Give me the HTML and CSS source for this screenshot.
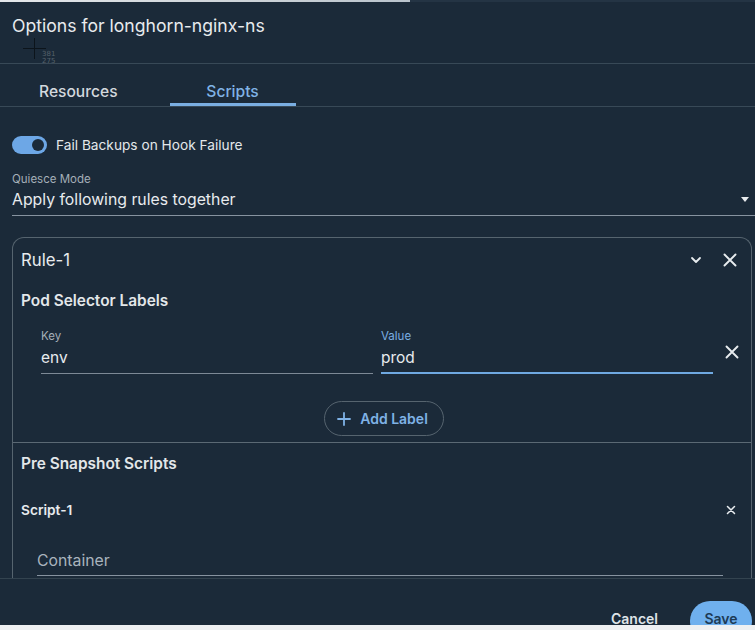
FILE: index.html
```html
<!DOCTYPE html>
<html>
<head>
<meta charset="utf-8">
<link rel="stylesheet" href="styles.css">
</head>
<body>
<div class="topstrip"><div class="topstrip-light"></div></div>
<div class="app">
  <header class="header">
    <h1 class="title">Options for longhorn-nginx-ns</h1>
    <div class="cursor">
      <span class="cursor-v"></span><span class="cursor-h"></span>
      <span class="cursor-txt">381<br>275</span>
    </div>
  </header>
  <nav class="tabs">
    <div class="tab">Resources</div>
    <div class="tab active">Scripts</div>
  </nav>
  <main class="content">
    <div class="toggle-row">
      <span class="toggle"><span class="knob"></span></span>
      <span class="toggle-label">Fail Backups on Hook Failure</span>
    </div>
    <div class="select">
      <div class="field-label">Quiesce Mode</div>
      <div class="select-value">
        <span>Apply following rules together</span>
        <span class="caret"></span>
      </div>
    </div>
    <section class="card">
      <div class="card-head">
        <span class="rule-title">Rule-1</span>
        <div class="head-icons">
          <svg width="14" height="14" viewBox="0 0 14 14"><path d="M3 5 L7 9 L11 5" fill="none" stroke="#e8ecef" stroke-width="1.8" stroke-linecap="round" stroke-linejoin="round"/></svg>
          <svg width="16" height="16" viewBox="0 0 16 16"><path d="M2.5 2.5 L13.5 13.5 M13.5 2.5 L2.5 13.5" fill="none" stroke="#e8ecef" stroke-width="1.9" stroke-linecap="round"/></svg>
        </div>
      </div>
      <div class="section-title">Pod Selector Labels</div>
      <div class="label-row">
        <div class="field key">
          <div class="field-label">Key</div>
          <div class="field-value">env</div>
        </div>
        <div class="field value focused">
          <div class="field-label">Value</div>
          <div class="field-value">prod</div>
        </div>
        <svg class="row-x" width="16" height="16" viewBox="0 0 16 16"><path d="M2.5 2.5 L13.5 13.5 M13.5 2.5 L2.5 13.5" fill="none" stroke="#e8ecef" stroke-width="1.9" stroke-linecap="round"/></svg>
      </div>
      <div class="add-wrap">
        <button class="add-btn"><svg width="14" height="14" viewBox="0 0 14 14"><path d="M7 1 V13 M1 7 H13" stroke="#7fb2e6" stroke-width="1.8" stroke-linecap="round"/></svg>Add Label</button>
      </div>
      <div class="card-sep"></div>
      <div class="section-title pre">Pre Snapshot Scripts</div>
      <div class="script-head">
        <span class="script-title">Script-1</span>
        <svg width="10" height="10" viewBox="0 0 10 10"><path d="M1.5 1.5 L8.5 8.5 M8.5 1.5 L1.5 8.5" fill="none" stroke="#e8ecef" stroke-width="1.5" stroke-linecap="round"/></svg>
      </div>
      <div class="container-field">Container</div>
    </section>
  </main>
  <footer class="footer">
    <button class="btn-cancel">Cancel</button>
    <button class="btn-save">Save</button>
  </footer>
</div>
<div class="bottomstrip"></div>
</body>
</html>
```
FILE: styles.css
```css
* { box-sizing: border-box; }
html, body { margin: 0; padding: 0; }
body {
  width: 755px;
  height: 630px;
  overflow: hidden;
  background: #1b2a39;
  font-family: Inter, "Noto Sans", "Liberation Sans", sans-serif;
  color: #e6e9ec;
}
.topstrip { height: 2px; background: #243444; }
.topstrip-light { width: 410px; height: 2px; background: linear-gradient(90deg, #e4e7ea, #cdd3d8 60%, #b9c3cc); }
.app { height: 623px; display: flex; flex-direction: column; overflow: hidden; position: relative; }
.header { height: 62px; border-bottom: 1px solid #384957; padding: 13px 12px 0; position: relative; }
.title { margin: 0; font-size: 17.6px; font-weight: 400; line-height: 22px; color: #e8ebee; letter-spacing: 0; }
.cursor { position: absolute; left: 23px; top: 36px; width: 40px; height: 30px; }
.cursor-v { position: absolute; left: 11px; top: 0; width: 1px; height: 21px; background: #0c141b; }
.cursor-h { position: absolute; left: 0; top: 10px; width: 23px; height: 1px; background: #0c141b; }
.cursor-txt { position: absolute; left: 19px; top: 13px; font-size: 7px; line-height: 7px; color: #56616b; font-family: "DejaVu Sans", sans-serif; }
.tabs { height: 43px; display: flex; border-bottom: 1px solid #384957; padding-left: 3px; gap: 16px; }
.tab { padding: 19px 36px 0; font-size: 15.6px; font-weight: 500; color: #d3d8dd; height: 42px; line-height: 18px; }
.tab.active { color: #80b3e6; border-bottom: 3px solid #7aaee2; width: 126px; text-align: center; padding-left: 0; padding-right: 0; }
.content { flex: 1; overflow: hidden; padding: 29px 0 0 12px; }
.toggle-row { display: flex; align-items: center; height: 18px; gap: 9px; }
.toggle { width: 35px; height: 18px; border-radius: 9px; background: #6da7e6; position: relative; }
.knob { position: absolute; right: 3px; top: 3px; width: 12px; height: 12px; border-radius: 50%; background: #1b2a39; }
.toggle-label { font-size: 13.7px; color: #e3e7ea; }
.select { margin-top: 18px; }
.field-label { font-size: 11.5px; color: #a5afb8; line-height: 14px; }
.select-value { display: flex; justify-content: space-between; align-items: center; font-size: 15.8px; color: #e8ebee; height: 30px; border-bottom: 1px solid #8793a0; padding-bottom: 2px; }
.caret { width: 0; height: 0; border-left: 4.5px solid transparent; border-right: 4.5px solid transparent; border-top: 5px solid #e8ebee; margin-right: 6px; }
.card { margin-top: 21px; margin-right: 3px; border: 1px solid #56646f; border-bottom: none; border-radius: 12px 12px 0 0; height: 380px; }
.card-head { display: flex; justify-content: space-between; align-items: center; height: 43px; padding: 0 13px 0 8px; }
.rule-title { font-size: 16.8px; color: #e8ebee; padding-top: 1px; }
.head-icons { display: flex; align-items: center; gap: 19px; }
.section-title { font-size: 15.4px; font-weight: 600; color: #e3e7ea; padding-left: 8px; margin-top: 10px; line-height: 19px; }
.label-row { display: flex; align-items: flex-start; padding-left: 28px; margin-top: 19px; position: relative; }
.field { width: 332px; }
.field.value { margin-left: 8px; }
.field .field-value { font-size: 15.5px; color: #e8ebee; height: 29px; line-height: 26px; border-bottom: 1px solid #7d8996; margin-top: 2px; }
.field.focused .field-label { color: #7aaee2; }
.field.focused .field-value { border-bottom: 2px solid #6fa9e2; }
.row-x { margin-left: 11px; margin-top: 15px; }
.add-wrap { display: flex; justify-content: center; margin-top: 27px; }
.add-btn { margin-left: 4px; display: flex; align-items: center; gap: 9px; height: 35px; padding: 0 15px 0 12px; border-radius: 18px; border: 1px solid #56646f; background: transparent; color: #7fb2e6; font-family: inherit; font-size: 14px; font-weight: 600; }
.card-sep { height: 1px; background: #5b6974; margin-top: 6px; }
.section-title.pre { margin-top: 11px; }
.script-head { display: flex; justify-content: space-between; align-items: center; margin-top: 29px; padding: 0 15px 0 8px; }
.script-title { font-size: 13.7px; font-weight: 600; color: #e8ebee; }
.container-field { margin: 30px 28px 0 24px; font-size: 15.8px; color: #a9b4be; height: 28px; line-height: 26px; border-bottom: 1px solid #8793a0; }
.footer { height: 47px; border-top: 1px solid #33434f; display: flex; justify-content: flex-end; align-items: flex-start; padding-top: 22px; flex-shrink: 0; }
.btn-cancel { background: transparent; border: none; color: #dfe4e8; font-family: inherit; font-size: 14px; font-weight: 600; margin-top: 9px; padding: 0; margin-right: 32px; }
.btn-save { width: 62px; height: 40px; border-radius: 20px; border: none; background: #6fb0ee; color: #1d3a55; font-family: inherit; font-size: 14px; font-weight: 600; margin-right: 3px; padding: 0 0 6px; }
.bottomstrip { height: 5px; background: #eef0f2; position: relative; }
```
